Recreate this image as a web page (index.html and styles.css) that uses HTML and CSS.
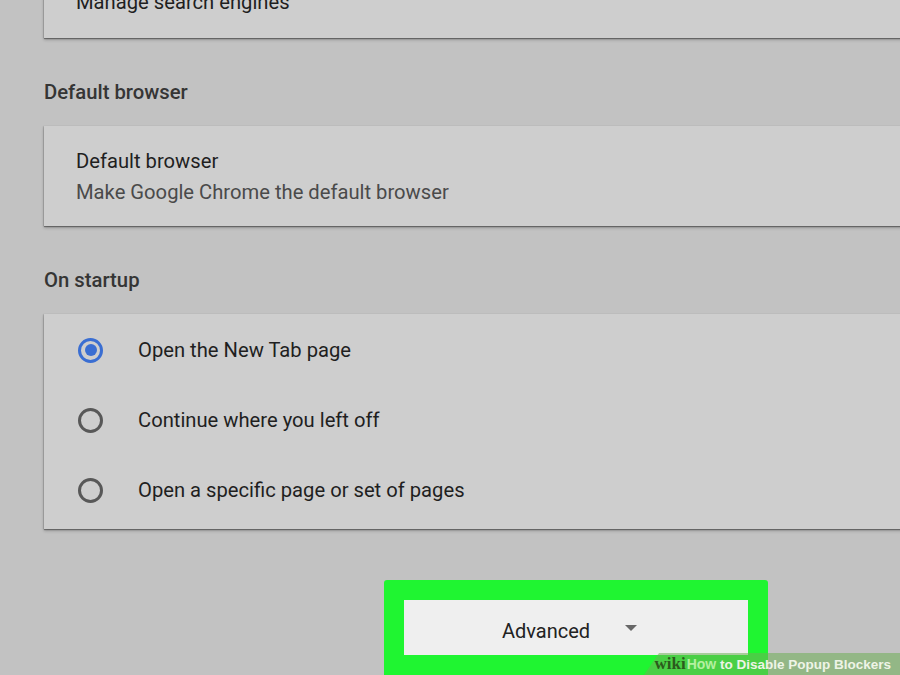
FILE: index.html
```html
<!DOCTYPE html>
<html>
<head>
<meta charset="utf-8">
<link rel="stylesheet" href="styles.css">
</head>
<body>
<div class="page">
  <div class="card card-top">
    <div class="primary">Manage search engines</div>
  </div>

  <h2 class="section-title">Default browser</h2>
  <div class="card card-text">
    <div class="primary">Default browser</div>
    <div class="secondary">Make Google Chrome the default browser</div>
  </div>

  <h2 class="section-title">On startup</h2>
  <div class="card card-radios">
    <div class="radio-row">
      <span class="radio checked"></span>
      <span class="primary">Open the New Tab page</span>
    </div>
    <div class="radio-row">
      <span class="radio"></span>
      <span class="primary">Continue where you left off</span>
    </div>
    <div class="radio-row">
      <span class="radio"></span>
      <span class="primary">Open a specific page or set of pages</span>
    </div>
  </div>

  <div class="highlight">
    <div class="advanced-btn">
      <span class="advanced-label">Advanced</span>
      <span class="caret"></span>
    </div>
  </div>
</div>

<div class="watermark">
  <span class="wm-wiki">wiki</span><span class="wm-how">How</span><span class="wm-title"> to Disable Popup Blockers</span>
</div>
</body>
</html>
```

FILE: styles.css
```css
html, body {
  margin: 0;
  padding: 0;
  height: 100%;
  overflow: hidden;
}

body {
  background: #c2c2c2;
  font-family: Roboto, "Liberation Sans", Arial, sans-serif;
  position: relative;
}

.page {
  padding-left: 44px;
  display: flex;
  flex-direction: column;
}

.card {
  background: #cecece;
  margin-right: -30px;
  box-shadow: 0 1px 1px rgba(0, 0, 0, 0.35), 0 2px 3px rgba(0, 0, 0, 0.22), -1px 0 1px rgba(0, 0, 0, 0.08);
}

.primary {
  font-size: 20.2px;
  line-height: 31px;
  color: #1f1f1f;
}

.secondary {
  font-size: 20.2px;
  line-height: 31px;
  color: #4a4a4a;
}

.card-top {
  margin-top: -29px;
  padding: 16px 32px 20px;
}

.section-title {
  margin: 42px 0 22px;
  font-size: 20.3px;
  line-height: 24px;
  font-weight: 500;
  color: #353535;
}

.card-text {
  padding: 20px 32px 18px;
}

.card-radios {
  padding: 1px 0 4px 34px;
  display: flex;
  flex-direction: column;
}

.radio-row {
  height: 70px;
  display: flex;
  align-items: center;
  gap: 35px;
}

.radio {
  width: 25px;
  height: 25px;
  box-sizing: border-box;
  border: 3px solid #585858;
  border-radius: 50%;
  flex: none;
  display: flex;
  align-items: center;
  justify-content: center;
}

.radio.checked {
  border-color: #3a6ed2;
}

.radio.checked::after {
  content: "";
  width: 12px;
  height: 12px;
  border-radius: 50%;
  background: #3a6ed2;
}

.highlight {
  margin: 51px 0 0 340px;
  width: 344px;
  padding: 20px 20px 40px;
  background: #1ff531;
  border-radius: 3px;
}

.advanced-btn {
  height: 55px;
  background: #efefef;
  display: flex;
  align-items: center;
  padding-left: 98px;
  gap: 35px;
}

.advanced-label {
  font-size: 20px;
  color: #222;
  line-height: 24px;
  padding-top: 6px;
}

.caret {
  width: 0;
  height: 0;
  margin-top: 1px;
  border-left: 6.5px solid transparent;
  border-right: 6.5px solid transparent;
  border-top: 6px solid #676767;
}

.watermark {
  position: absolute;
  right: 0;
  bottom: 0;
  height: 22px;
  width: 256px;
  display: flex;
  align-items: center;
  justify-content: flex-end;
  padding-right: 9px;
  box-sizing: border-box;
  background: rgba(110, 175, 85, 0.55);
  clip-path: polygon(15px 0, 100% 0, 100% 100%, 0 100%);
  font-family: "Liberation Sans", Arial, sans-serif;
  font-weight: bold;
  white-space: nowrap;
}

.wm-wiki {
  font-family: "Liberation Serif", "Times New Roman", serif;
  font-size: 17px;
  color: #2c5a1c;
  margin-right: 1px;
}

.wm-how {
  font-size: 14px;
  color: #b4f0a0;
}

.wm-title {
  font-size: 13.5px;
  color: #eef4e6;
  white-space: pre;
}
```
